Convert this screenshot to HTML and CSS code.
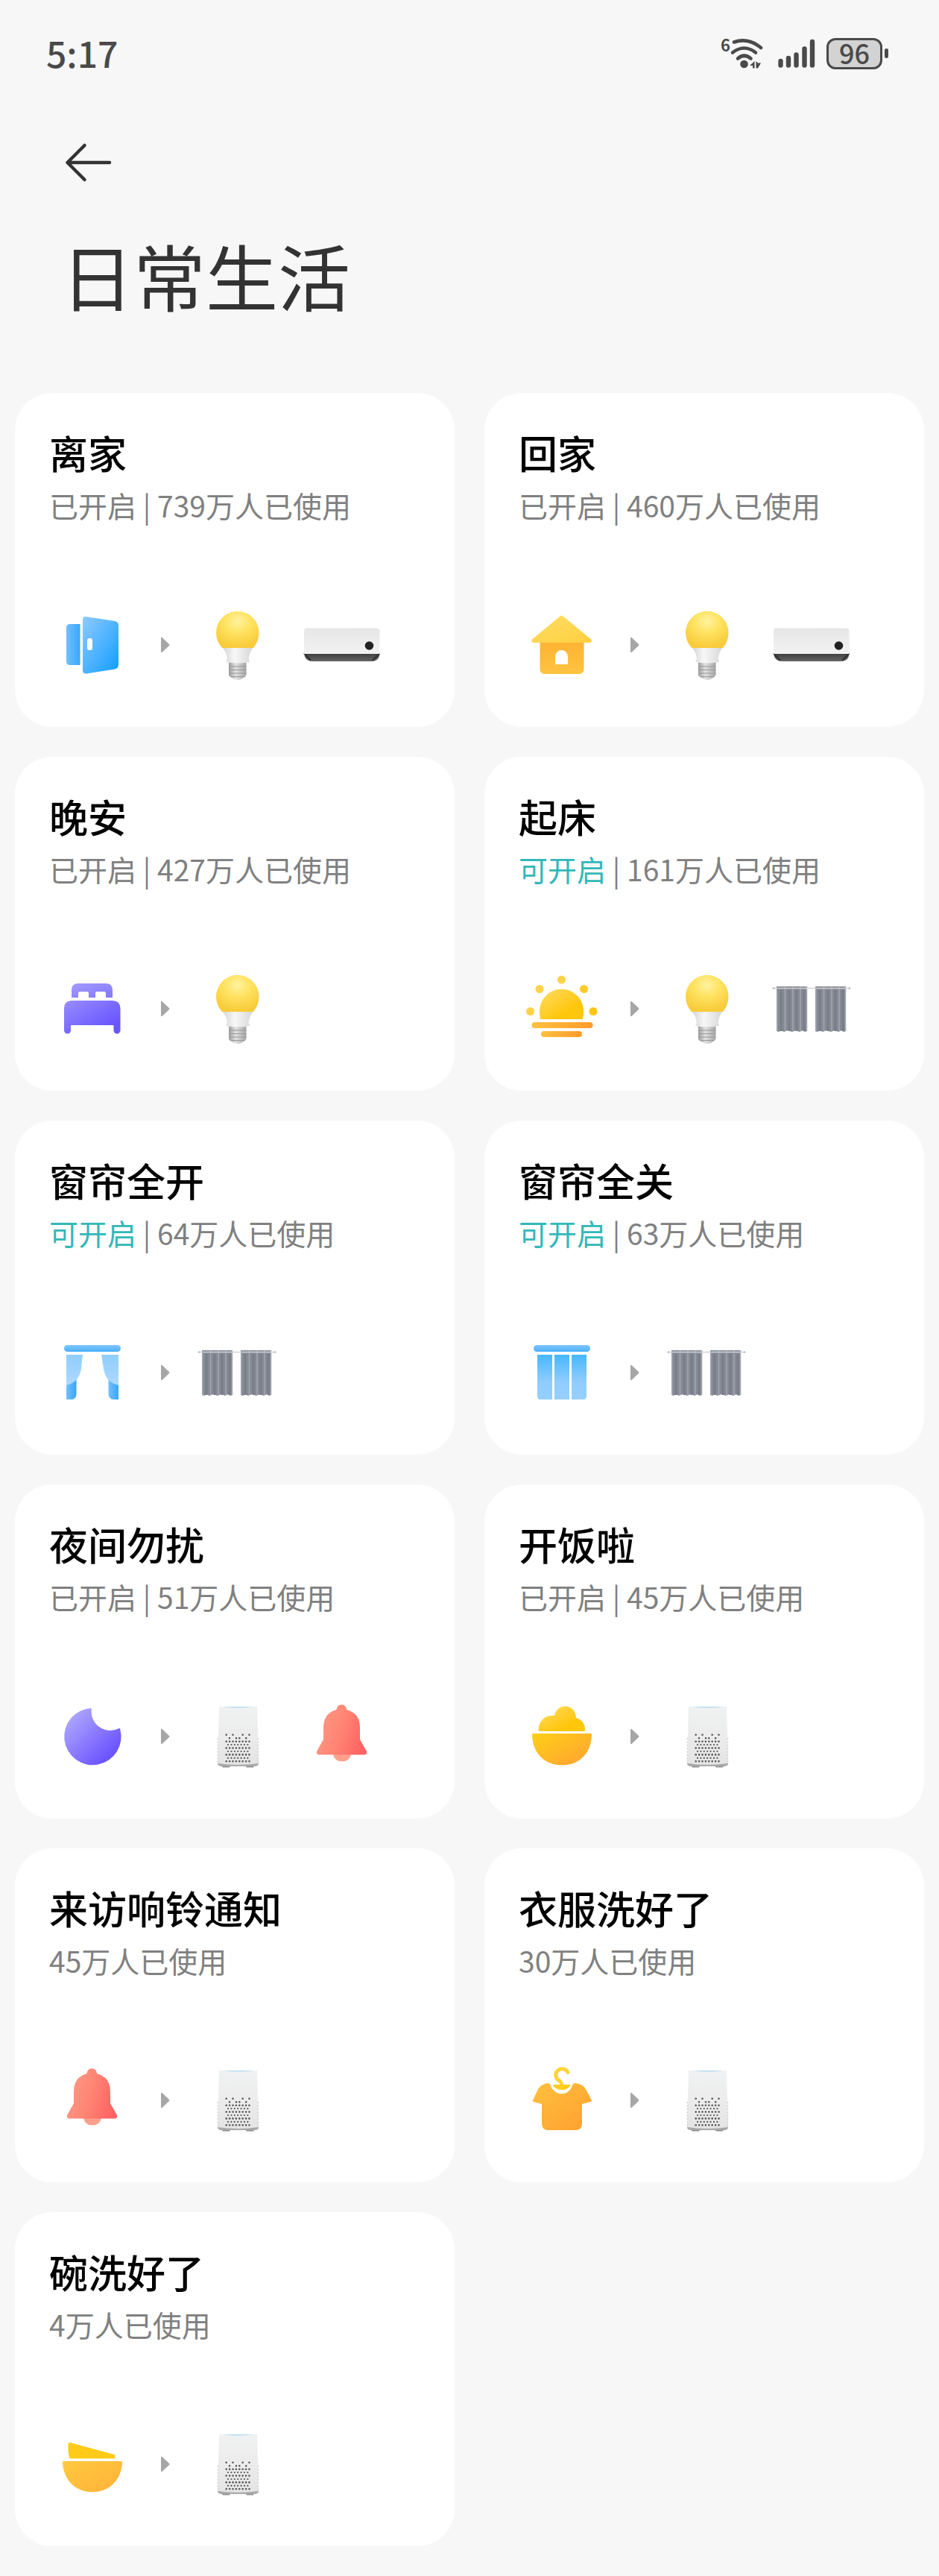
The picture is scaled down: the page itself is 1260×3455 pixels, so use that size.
FILE: index.html
```html
<!DOCTYPE html>
<html lang="zh-CN">
<head>
    <meta charset="UTF-8">
    <meta name="viewport" content="width=device-width, initial-scale=1.0">
    <title>日常生活</title>
    <link rel="stylesheet" href="styles.css">
</head>
<body>
    <!-- Icon library, used by the cards below -->
    <svg class="icon-library" aria-hidden="true">
        <defs>
            <linearGradient id="blue" x1="0" y1="0" x2="1" y2="1">
                <stop offset="0" stop-color="#90caff"/>
                <stop offset="1" stop-color="#0f9dff"/>
            </linearGradient>
            <linearGradient id="blue-side" x1="0" y1="0" x2="1" y2="0">
                <stop offset="0" stop-color="#74c0ff"/>
                <stop offset="1" stop-color="#38a6fb"/>
            </linearGradient>
            <linearGradient id="blue-rod" x1="0" y1="0" x2="0" y2="1">
                <stop offset="0" stop-color="#80c6ff"/>
                <stop offset="1" stop-color="#4ab0fc"/>
            </linearGradient>
            <linearGradient id="blue-cloth" x1="0" y1="0" x2="0" y2="1">
                <stop offset="0" stop-color="#8fcdfe"/>
                <stop offset="1" stop-color="#aed9ff"/>
            </linearGradient>
            <linearGradient id="blue-panel" x1="0" y1="0" x2="0" y2="1">
                <stop offset="0" stop-color="#46b7fd"/>
                <stop offset="0.6" stop-color="#90ccff"/>
                <stop offset="1" stop-color="#96d0ff"/>
            </linearGradient>
            <linearGradient id="purple" x1="0" y1="0" x2="1" y2="1">
                <stop offset="0.1" stop-color="#b0a8ff"/>
                <stop offset="0.8" stop-color="#6e56ff"/>
            </linearGradient>
            <linearGradient id="purple-head" x1="0" y1="0" x2="1" y2="1">
                <stop offset="0" stop-color="#a29cff"/>
                <stop offset="1" stop-color="#8476ff"/>
            </linearGradient>
            <linearGradient id="purple-bed" x1="0" y1="0" x2="1" y2="1">
                <stop offset="0" stop-color="#978dff"/>
                <stop offset="0.8" stop-color="#6a56ff"/>
            </linearGradient>
            <linearGradient id="roof" x1="0" y1="0" x2="1" y2="1">
                <stop offset="0" stop-color="#ffde66"/>
                <stop offset="1" stop-color="#ffce3e"/>
            </linearGradient>
            <linearGradient id="wall" x1="0" y1="0" x2="0" y2="1">
                <stop offset="0" stop-color="#ffb133"/>
                <stop offset="1" stop-color="#ffc43f"/>
            </linearGradient>
            <linearGradient id="yellow" x1="0" y1="0" x2="1" y2="1">
                <stop offset="0" stop-color="#ffdd66"/>
                <stop offset="0.7" stop-color="#ffc60a"/>
            </linearGradient>
            <linearGradient id="orange" x1="0" y1="0" x2="1" y2="0">
                <stop offset="0" stop-color="#ffc140"/>
                <stop offset="1" stop-color="#ff9b2a"/>
            </linearGradient>
            <linearGradient id="bowl" x1="0" y1="0" x2="1" y2="1">
                <stop offset="0" stop-color="#ffd016"/>
                <stop offset="0.9" stop-color="#ffa532"/>
            </linearGradient>
            <linearGradient id="shirt" x1="0" y1="0" x2="1" y2="1">
                <stop offset="0" stop-color="#ffc03e"/>
                <stop offset="1" stop-color="#ffa02f"/>
            </linearGradient>
            <linearGradient id="dish" x1="0" y1="0" x2="1" y2="1">
                <stop offset="0" stop-color="#ffc940"/>
                <stop offset="1" stop-color="#ffb238"/>
            </linearGradient>
            <radialGradient id="glass" cx="0.5" cy="0.28" r="0.7">
                <stop offset="0" stop-color="#fff3a0"/>
                <stop offset="0.45" stop-color="#ffe260"/>
                <stop offset="1" stop-color="#f8cb3a"/>
            </radialGradient>
            <linearGradient id="neck" x1="0" y1="0" x2="1" y2="0">
                <stop offset="0" stop-color="#d2d2d2"/>
                <stop offset="0.4" stop-color="#f7f7f7"/>
                <stop offset="1" stop-color="#d6d6d6"/>
            </linearGradient>
            <linearGradient id="screw" x1="0" y1="0" x2="1" y2="0">
                <stop offset="0" stop-color="#9c9c9c"/>
                <stop offset="0.4" stop-color="#e2e2e2"/>
                <stop offset="1" stop-color="#a4a4a4"/>
            </linearGradient>
            <linearGradient id="plastic" x1="0" y1="0" x2="0" y2="1">
                <stop offset="0" stop-color="#e6e6e6"/>
                <stop offset="0.2" stop-color="#e9e9e9"/>
                <stop offset="1" stop-color="#f2f2f2"/>
            </linearGradient>
            <linearGradient id="vent" x1="0" y1="0" x2="0" y2="1">
                <stop offset="0" stop-color="#3c3c3c"/>
                <stop offset="1" stop-color="#656565"/>
            </linearGradient>
            <linearGradient id="speaker-body" x1="0" y1="0" x2="0" y2="1">
                <stop offset="0" stop-color="#f0f1f2"/>
                <stop offset="0.5" stop-color="#ececec"/>
                <stop offset="1" stop-color="#e4e4e4"/>
            </linearGradient>
            <linearGradient id="bell-body" x1="0" y1="0.3" x2="1" y2="0.6">
                <stop offset="0" stop-color="#ff9a86"/>
                <stop offset="0.5" stop-color="#ff8474"/>
                <stop offset="1" stop-color="#ff6262"/>
            </linearGradient>
        </defs>

        <symbol id="door" viewBox="0 0 116 116">
            <path d="M28 30H41.500V85H28Q23 85 23 80V35Q23 30 28 30Z" fill="url(#blue-side)"/>
            <path d="M49 20L88 26Q93 27 93 32V84Q93 89 88 90.500L50 96.500Q45 97 45 92V24Q45 19.500 49 20Z" fill="url(#blue)"/>
            <rect x="51" y="49" width="7" height="16" rx="3" fill="#fff"/>
        </symbol>

        <symbol id="house" viewBox="0 0 116 116">
            <path d="M28.500 52H87.500V90Q87.500 97 80.500 97H35.500Q28.500 97 28.500 90Z" fill="url(#wall)"/>
            <path d="M55.500 19.500Q57.500 18 59.500 19.500L97 50.500Q99.500 54.500 95 55H20Q15.500 54.500 18 50.500Z" fill="url(#roof)"/>
            <path d="M49 84V73.500A8.500 8.500 0 0 1 66 73.500V84Z" fill="#fff"/>
        </symbol>

        <symbol id="bed" viewBox="0 0 116 116">
            <path d="M30 43V33Q30 24 39 24H76Q85 24 85 33V43H76V37Q76 35 74 35H64Q62 35 62 37V43H53V37Q53 35 51 35H41Q39 35 39 37V43Z" fill="url(#purple-head)"/>
            <path d="M31 47H84Q95.500 47 95.500 58V87A4.300 4.300 0 0 1 86.500 87V80H29V87A4.300 4.300 0 0 1 20 87V58Q20 47 31 47Z" fill="url(#purple-bed)"/>
        </symbol>

        <symbol id="sunrise" viewBox="0 0 116 116">
            <g fill="#ffd24a">
                <circle cx="57.500" cy="19" r="5.500"/>
                <circle cx="28" cy="31.500" r="5.500"/>
                <circle cx="87.500" cy="31.500" r="5.500" fill="#ffcb28"/>
                <circle cx="15.500" cy="61.500" r="5.500"/>
                <circle cx="100" cy="61.500" r="5.500" fill="#ffc414"/>
            </g>
            <path d="M29 72Q28 68 28 61A29.500 29.500 0 0 1 87 61Q87 68 86 72Z" fill="url(#yellow)"/>
            <rect x="17.500" y="76" width="82" height="8" rx="4" fill="url(#orange)"/>
            <rect x="30" y="88" width="55" height="8" rx="4" fill="url(#orange)"/>
        </symbol>

        <symbol id="curtain-open" viewBox="0 0 116 116">
            <path d="M23 72L36.500 66V88Q35 94 30 94H23Z" fill="url(#blue-side)"/>
            <path d="M93 72L79.500 66V88Q81 94 86 94H93Z" fill="url(#blue-side)"/>
            <path d="M23 34H45Q44 40 43 53Q40 71 23 75Z" fill="url(#blue-cloth)"/>
            <path d="M93 34H70Q71 40 73 53Q76 71 93 75Z" fill="url(#blue-cloth)"/>
            <rect x="20" y="21" width="76" height="9" rx="4.500" fill="url(#blue-rod)"/>
        </symbol>

        <symbol id="curtain-closed" viewBox="0 0 116 116">
            <path d="M25 34H45V94H29Q25 94 25 89Z" fill="url(#blue-panel)"/>
            <rect x="48" y="34" width="20" height="60" fill="url(#blue-panel)"/>
            <path d="M71 34H91V89Q91 94 87 94H71Z" fill="url(#blue-panel)"/>
            <rect x="20" y="21" width="76" height="9" rx="4.500" fill="url(#blue-rod)"/>
        </symbol>

        <symbol id="moon" viewBox="0 0 116 116">
            <path d="M56.500 20Q56.700 20 56.700 21.500A25.500 25.500 0 0 0 94 47Q95 46.500 95.200 48A38.200 38.200 0 1 1 56.500 20Z" fill="url(#purple)"/>
        </symbol>

        <symbol id="rice" viewBox="0 0 116 116">
            <path d="M28 51Q26.500 51 26.500 49C27 36 36 29 48 30C51 13 76 13 77 33Q89 37 89 49Q89 51 88 51Z" fill="url(#yellow)"/>
            <path d="M19 54H97Q98 54 98 56C97 82 80 96.500 58 96.500C36 96.500 19 82 18 56Q18 54 19 54Z" fill="url(#bowl)"/>
        </symbol>

        <symbol id="laundry" viewBox="0 0 116 116">
            <path d="M39 35Q42 35 43 38C48 53 67 53 72 38Q73 35 76 35Q86 36 90 43L98 58Q98 60 96 60L85 63V89Q85 98 76 98H40Q31 98 31 89V63L20 60Q18 60 19 58L26 43Q30 36 39 35Z" fill="url(#shirt)"/>
            <path d="M66 20.500A8.500 8.500 0 1 0 54 31.500Q57.500 33 57.500 38" fill="none" stroke="#ffd338" stroke-width="5" stroke-linecap="round"/>
            <path d="M47 37H69Q70 38 69 39Q65 44 58 44Q51 44 46.500 39Q46 38 47 37Z" fill="#ffcd1c"/>
        </symbol>

        <symbol id="dishes" viewBox="0 0 116 116">
            <path d="M28 29L87 45Q89 46 88.500 49Q88 50.500 86 50.500H29Q27.500 50.500 27 49Q24.500 40 25.500 31Q26 28.500 28 29Z" fill="#ffcb18"/>
            <path d="M20 54H96Q98.500 54 98 57C96 82 78 95.500 58 95.500C38 95.500 20 82 18 57Q17.500 54 20 54Z" fill="url(#dish)"/>
        </symbol>

        <symbol id="bell" viewBox="0 0 116 116">
            <path d="M46 82H70Q68 91.500 58 91.500Q48 91.500 46 82Z" fill="#ffa08e"/>
            <path d="M50.500 22A6.500 6.500 0 0 1 64 22Q82 27 82 46V62L91 78Q92 82 88 82.500H27Q23 82 24 78L33 62V46Q33 27 50.500 22Z" fill="url(#bell-body)"/>
        </symbol>

        <symbol id="bulb" viewBox="0 0 116 116">
            <path d="M47 81H70.500V98Q70 100 67 102Q63 105 59 105Q55 105 51 102Q47 100 47 98Z" fill="url(#screw)"/>
            <path d="M47 87H70.500M47 91.500H70.500M47 96H70.500M49 100.500H68.500" stroke="#999" stroke-width="1"/>
            <path d="M38 61H80Q75 67 73.500 77Q76 79 74.500 81Q59 84 44 81Q42.500 79 45 77Q44 67 38 61Z" fill="url(#neck)"/>
            <path d="M38 62Q30 53 30 41.500A28.700 28.700 0 0 1 87.500 41.500Q87.500 53 80 62Z" fill="url(#glass)"/>
        </symbol>

        <symbol id="aircon" viewBox="0 0 116 116">
            <path d="M7 69H108.500Q108 80 97 80H18Q8 80 7 69Z" fill="url(#vent)"/>
            <path d="M7 69L16 79M108.500 69L99 79" stroke="#303030" stroke-width="2"/>
            <path d="M11 35.500H104.500Q108.500 35.500 108.500 39.500V70H7V39.500Q7 35.500 11 35.500Z" fill="url(#plastic)"/>
            <circle cx="94.500" cy="59" r="5.800" fill="#222"/>
        </symbol>

        <symbol id="drapes" viewBox="0 0 116 116">
            <g id="drape">
                <path d="M11 28H52V88L49 89L46 87L42 89L37 87L32 89L26 87L21 89L17 87L14 89L11 88Z" fill="#858a95"/>
                <path d="M17 33V88M28 33V88M38 33V88M48 33V88" stroke="#797e89" stroke-width="3"/>
                <path d="M12 32V88M22.500 28V88M33 28V88M43 28V88M51.500 28V88" stroke="#a3a7b0" stroke-width="1.500"/>
            </g>
            <use href="#drape" x="52"/>
            <path d="M7 30.500H109" stroke="#cfd1d5" stroke-width="1.500"/>
            <circle cx="7" cy="30.500" r="1.500" fill="#c3c5c9"/>
            <circle cx="109" cy="30.500" r="1.500" fill="#c3c5c9"/>
        </symbol>

        <symbol id="speaker" viewBox="0 0 116 116">
            <path d="M36 96H50L48 99.500H39ZM68 96H82L80 99.500H71Z" fill="#8f8f8f"/>
            <path d="M32 92H87V95Q86 98 82 98H37Q33 98 32 95Z" fill="#a9a9a9"/>
            <path d="M34 18H85L87 94Q59 98 32 94Z" fill="url(#speaker-body)"/>
            <path d="M40 18H80Q60 21 40 18Z" fill="#b5daf3"/>
            <path d="M32.500 60V94M86.500 60V94" stroke="#d0d0d0" stroke-width="1.500" stroke-dasharray="2 2.400"/>
            <g fill="none" stroke="#555" stroke-width="2.600" stroke-linecap="round">
                <path d="M43.700 55.700h0M52.500 55.700h0M65.700 55.700h0M74.500 55.700h0M48 60.200h0M57 60.200h0M61.300 60.200h0M70.200 60.200h0"/>
                <path stroke-dasharray="0 4.400" d="M43.700 64.700H75M43.700 73.500H75M43.700 82.400H75M43.700 91.300H75"/>
                <path stroke-dasharray="0 4.400" stroke-width="2.200" d="M46 69.100H73.500M46 78H73.500M46 86.900H73.500"/>
            </g>
        </symbol>

        <symbol id="arrow" viewBox="0 0 14 24">
            <path d="M2 3Q2 1 4 2.500L13 11Q14 12 13 13L4 21.500Q2 23 2 21Z" fill="#a6a6a6"/>
        </symbol>
    </svg>

    <div class="status-bar">
        <span class="time">5:17</span>
        <div class="status-icons">
            <svg class="wifi" viewBox="0 -10 58 64" role="img" aria-label="Wi-Fi 6">
                <text class="wifi-version" x="0" y="19">6</text>
                <g fill="none" stroke="#4a4a4a" stroke-width="4.600" stroke-linecap="round">
                    <path d="M18 6.500Q37 0 54 14"/>
                    <path d="M16 20.500Q31.500 8.500 47 20.500"/>
                    <path d="M23 28.500Q31.500 21 40.500 28.500"/>
                </g>
                <circle cx="31.500" cy="36" r="5.300" fill="#4a4a4a"/>
                <path d="M45.500 32V41.500H43V38H39ZM47.500 32L50 34.500H54L50 41.500H47.500Z" fill="#4a4a4a"/>
            </svg>
            <svg class="signal" viewBox="0 0 50 40" role="img" aria-label="信号">
                <path d="M3.500 30V35.500M14 26V35.500M24.500 21.500V35.500M35.500 13.500V35.500M46 4V35.500" stroke="#4a4a4a" stroke-width="6.400" stroke-linecap="round"/>
            </svg>
            <div class="battery">
                <span class="battery-level">96</span>
                <span class="battery-tip"></span>
            </div>
        </div>
    </div>

    <header>
        <button class="back-button" type="button" aria-label="返回">
            <svg viewBox="0 0 64 56">
                <path d="M27.500 5L4.500 28L27.500 51M4.500 28H61" fill="none" stroke="#333" stroke-width="4.500" stroke-linecap="round" stroke-linejoin="round"/>
            </svg>
        </button>
        <h1>日常生活</h1>
    </header>

    <main class="scenes">
        <a class="card" href="#">
            <h2>离家</h2>
            <p>已开启 | 739万人已使用</p>
            <div class="flow">
                <svg class="icon"><use href="#door"/></svg>
                <svg class="arrow"><use href="#arrow"/></svg>
                <svg class="icon"><use href="#bulb"/></svg>
                <svg class="icon"><use href="#aircon"/></svg>
            </div>
        </a>
        <a class="card" href="#">
            <h2>回家</h2>
            <p>已开启 | 460万人已使用</p>
            <div class="flow">
                <svg class="icon"><use href="#house"/></svg>
                <svg class="arrow"><use href="#arrow"/></svg>
                <svg class="icon"><use href="#bulb"/></svg>
                <svg class="icon"><use href="#aircon"/></svg>
            </div>
        </a>
        <a class="card" href="#">
            <h2>晚安</h2>
            <p>已开启 | 427万人已使用</p>
            <div class="flow">
                <svg class="icon"><use href="#bed"/></svg>
                <svg class="arrow"><use href="#arrow"/></svg>
                <svg class="icon"><use href="#bulb"/></svg>
            </div>
        </a>
        <a class="card" href="#">
            <h2>起床</h2>
            <p><span class="available">可开启</span> | 161万人已使用</p>
            <div class="flow">
                <svg class="icon"><use href="#sunrise"/></svg>
                <svg class="arrow"><use href="#arrow"/></svg>
                <svg class="icon"><use href="#bulb"/></svg>
                <svg class="icon"><use href="#drapes"/></svg>
            </div>
        </a>
        <a class="card" href="#">
            <h2>窗帘全开</h2>
            <p><span class="available">可开启</span> | 64万人已使用</p>
            <div class="flow">
                <svg class="icon"><use href="#curtain-open"/></svg>
                <svg class="arrow"><use href="#arrow"/></svg>
                <svg class="icon"><use href="#drapes"/></svg>
            </div>
        </a>
        <a class="card" href="#">
            <h2>窗帘全关</h2>
            <p><span class="available">可开启</span> | 63万人已使用</p>
            <div class="flow">
                <svg class="icon"><use href="#curtain-closed"/></svg>
                <svg class="arrow"><use href="#arrow"/></svg>
                <svg class="icon"><use href="#drapes"/></svg>
            </div>
        </a>
        <a class="card" href="#">
            <h2>夜间勿扰</h2>
            <p>已开启 | 51万人已使用</p>
            <div class="flow">
                <svg class="icon"><use href="#moon"/></svg>
                <svg class="arrow"><use href="#arrow"/></svg>
                <svg class="icon"><use href="#speaker"/></svg>
                <svg class="icon"><use href="#bell"/></svg>
            </div>
        </a>
        <a class="card" href="#">
            <h2>开饭啦</h2>
            <p>已开启 | 45万人已使用</p>
            <div class="flow">
                <svg class="icon"><use href="#rice"/></svg>
                <svg class="arrow"><use href="#arrow"/></svg>
                <svg class="icon"><use href="#speaker"/></svg>
            </div>
        </a>
        <a class="card" href="#">
            <h2>来访响铃通知</h2>
            <p>45万人已使用</p>
            <div class="flow">
                <svg class="icon"><use href="#bell"/></svg>
                <svg class="arrow"><use href="#arrow"/></svg>
                <svg class="icon"><use href="#speaker"/></svg>
            </div>
        </a>
        <a class="card" href="#">
            <h2>衣服洗好了</h2>
            <p>30万人已使用</p>
            <div class="flow">
                <svg class="icon"><use href="#laundry"/></svg>
                <svg class="arrow"><use href="#arrow"/></svg>
                <svg class="icon"><use href="#speaker"/></svg>
            </div>
        </a>
        <a class="card" href="#">
            <h2>碗洗好了</h2>
            <p>4万人已使用</p>
            <div class="flow">
                <svg class="icon"><use href="#dishes"/></svg>
                <svg class="arrow"><use href="#arrow"/></svg>
                <svg class="icon"><use href="#speaker"/></svg>
            </div>
        </a>
    </main>
</body>
</html>
```
FILE: styles.css
```css
* {
    box-sizing: border-box;
}

body {
    margin: 0;
    font-family: "Noto Sans CJK SC", "Noto Sans", sans-serif;
    background-color: #f7f7f7;
    color: #333;
}

h1, h2, p {
    margin: 0;
}

svg {
    display: block;
}

.icon-library {
    position: absolute;
    width: 0;
    height: 0;
}

/* Status bar */
.status-bar {
    display: flex;
    justify-content: space-between;
    align-items: center;
    height: 144px;
    padding: 0 76px 0 62px;
    color: #4a4a4a;
}

.time {
    padding-bottom: 4px;
    font-size: 48px;
    font-weight: 500;
    line-height: 56px;
}

.status-icons {
    display: flex;
    align-items: center;
}

.wifi {
    width: 58px;
    height: 64px;
}

.wifi-version {
    font-size: 22px;
    font-weight: 700;
    fill: #4a4a4a;
}

.signal {
    width: 50px;
    height: 40px;
    margin: 0 15px 0 19px;
}

.battery {
    position: relative;
    width: 75px;
    height: 42px;
    border: 3px solid #4a4a4a;
    border-radius: 12px;
    background-color: #d3d3d3;
    text-align: center;
}

.battery-level {
    display: block;
    font-size: 36px;
    font-weight: 500;
    line-height: 32px;
}

.battery-tip {
    position: absolute;
    top: 11px;
    right: -11px;
    width: 5px;
    height: 13px;
    border-radius: 3px;
    background-color: #4a4a4a;
}

/* Page header */
header {
    padding: 46px 82px 0;
}

.back-button {
    display: block;
    margin-left: 4px;
    padding: 0;
    border: none;
    background: none;
    cursor: pointer;
}

.back-button svg {
    width: 64px;
    height: 56px;
}

h1 {
    margin-top: 62px;
    font-size: 97px;
    font-weight: 400;
    line-height: 120px;
}

/* Scene cards */
.scenes {
    display: grid;
    grid-template-columns: 1fr 1fr;
    gap: 40px;
    padding: 99px 20px 40px;
}

.card {
    padding: 50px 20px 52px 46px;
    border-radius: 50px;
    background-color: #fff;
    color: #000;
    text-decoration: none;
}

.card h2 {
    font-size: 52px;
    font-weight: 500;
    line-height: 60px;
}

.card p {
    margin-top: 16px;
    color: #808080;
    font-size: 39px;
    line-height: 48px;
}

.card .available {
    color: #32b8b8;
}

.flow {
    display: flex;
    align-items: center;
    margin-top: 106px;
}

.icon {
    width: 116px;
    height: 116px;
}

.icon + .icon {
    margin-left: 25px;
}

.arrow {
    width: 14px;
    height: 24px;
    margin: 0 32px;
}
```
